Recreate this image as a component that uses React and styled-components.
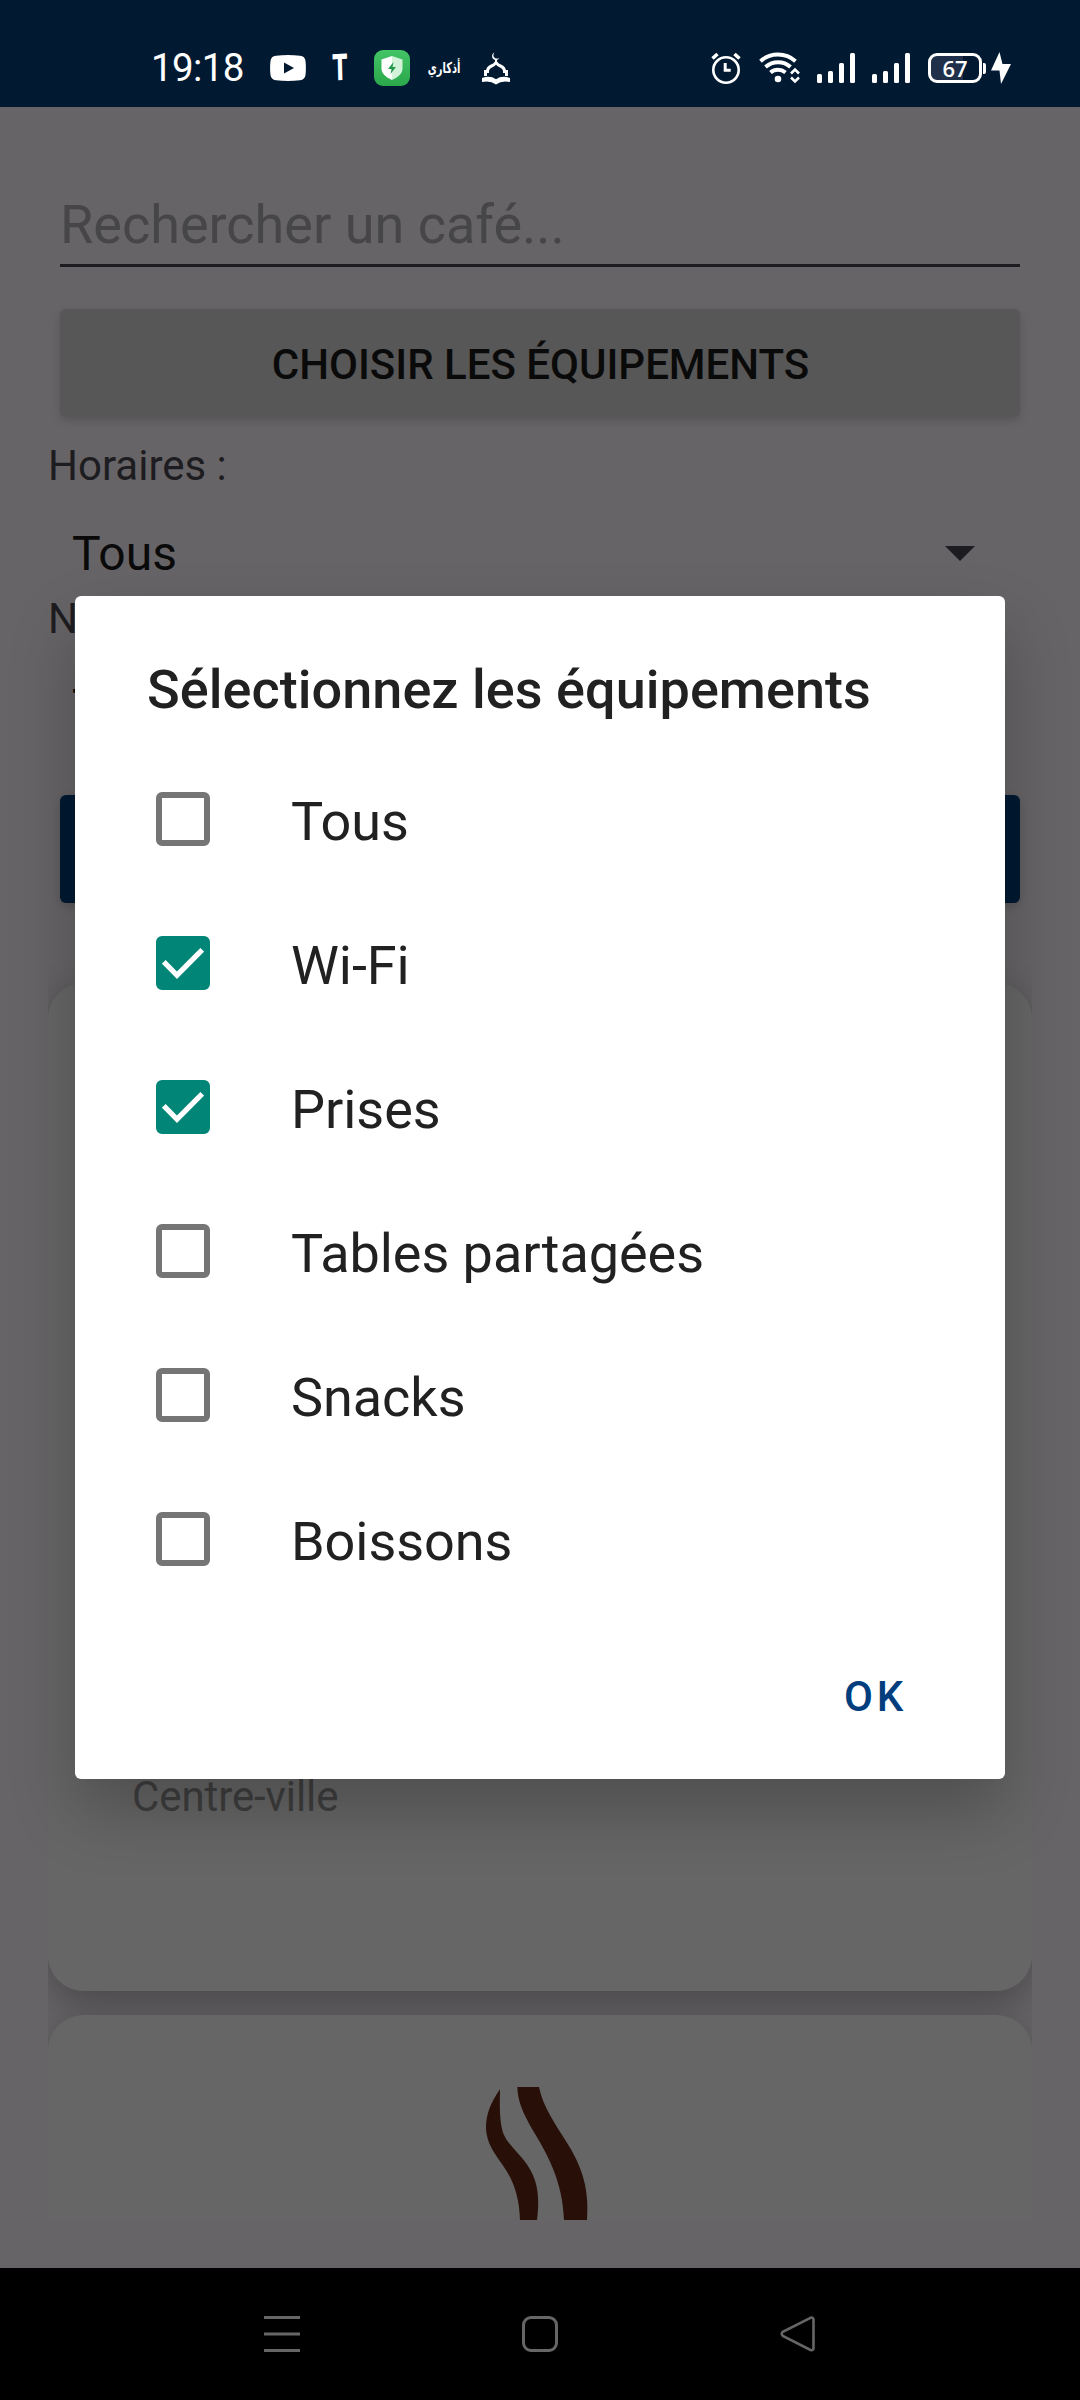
import React from "react";
import styled, { createGlobalStyle } from "styled-components";

const GlobalStyle = createGlobalStyle`
  * { box-sizing: border-box; }
  body { margin: 0; background: #000; }
`;

const Screen = styled.div`
  position: relative;
  display: flex;
  flex-direction: column;
  width: 1080px;
  height: 2400px;
  overflow: hidden;
  background: #676467;
  font-family: Roboto, "Liberation Sans", sans-serif;
`;

const StatusBar = styled.header`
  display: flex;
  align-items: center;
  justify-content: space-between;
  flex: none;
  height: 107px;
  padding: 29px 69px 0 151px;
  background: #011931;
  color: #fff;
`;

const StatusGroup = styled.div`
  display: flex;
  align-items: center;
`;

const Clock = styled.span`
  width: 97px;
  font-size: 38.5px;
  font-weight: 400;
  line-height: 44px;
  letter-spacing: -0.6px;
  white-space: nowrap;
`;

const Icon = styled.svg`
  display: block;
  flex: none;
  width: ${(p) => p.$w}px;
  height: ${(p) => p.$h}px;
  margin-left: ${(p) => p.$gap || 0}px;
`;

const LetterMark = styled.span`
  width: 16px;
  margin-left: 26px;
  font-family: "DejaVu Sans Condensed", "DejaVu Sans", sans-serif;
  font-size: 36px;
  font-weight: 700;
  line-height: 40px;
  display: flex;
  justify-content: center;
  transform: scaleX(0.66) rotate(-2deg);
`;

const ArabicMark = styled.span`
  width: 32px;
  margin-left: 18px;
  font-family: "DejaVu Sans", sans-serif;
  font-size: 15px;
  font-weight: 700;
  line-height: 20px;
  display: flex;
  justify-content: center;
  white-space: nowrap;
  transform: scaleX(0.66);
`;

const Battery = styled.div`
  display: flex;
  align-items: center;
  justify-content: center;
  width: 54px;
  height: 30px;
  margin-left: 18px;
  border: 3px solid #fff;
  border-radius: 9px;
  background: linear-gradient(90deg, #20304a 67%, #011931 67%);
  font-family: "Open Sans", sans-serif;
  font-size: 22px;
  font-weight: 600;
  line-height: 24px;
`;

const BatteryCap = styled.span`
  width: 3px;
  height: 11px;
  margin-left: 1px;
  border-radius: 0 2px 2px 0;
  background: #fff;
`;

const Page = styled.main`
  display: flex;
  flex-direction: column;
  flex: 1;
  min-height: 0;
  padding: 86px 48px 48px;
`;

const SearchField = styled.div`
  margin: 0 12px;
  padding-bottom: 8px;
  border-bottom: 3px solid #1d1c20;
  color: #464547;
  font-size: 54px;
  line-height: 63px;
  white-space: nowrap;
`;

const RaisedButton = styled.div`
  display: flex;
  align-items: center;
  justify-content: center;
  flex: none;
  height: 108px;
  margin: ${(p) => p.$top}px 12px 0;
  padding: 3px 0 0 1px;
  border-radius: 6px;
  background: ${(p) => p.$color};
  box-shadow: 0 3px 9px rgba(0, 0, 0, 0.16);
  color: #0a0a0a;
  font-size: 42px;
  font-weight: 500;
  line-height: 49px;
`;

const Label = styled.div`
  margin-top: ${(p) => p.$top || 0}px;
  color: #1d1c20;
  font-size: 42px;
  line-height: 49px;
`;

const Spinner = styled.div`
  display: flex;
  align-items: flex-start;
  justify-content: space-between;
  height: 104px;
  padding: 36px 57px 0 24px;
  color: #0a0a0a;
  font-size: 48px;
  line-height: 56px;
`;

const Arrow = styled.svg`
  width: 30px;
  height: 15px;
  margin-top: 20px;
`;

const CardList = styled.section`
  display: flex;
  flex-direction: column;
  gap: 24px;
  flex: 1;
  min-height: 0;
  margin-top: 50px;
  padding-top: 30px;
  overflow: hidden;
  isolation: isolate;
`;

const Card = styled.article`
  position: relative;
  display: flex;
  flex-direction: column;
  flex: none;
  height: 1008px;
  border-radius: 36px;
  background: #666;

  &::before {
    content: "";
    position: absolute;
    z-index: -1;
    inset: 0;
    border-radius: inherit;
    box-shadow: 0 12px 36px rgba(0, 0, 0, 0.28);
  }
`;

const CardPlace = styled.div`
  margin: auto 84px 170px;
  color: #3e3e3e;
  font-size: 42px;
  line-height: 49px;
  letter-spacing: -0.1px;
`;

const CardPicture = styled.svg`
  display: block;
  align-self: center;
  flex: none;
  width: 200px;
  height: 133px;
  margin-top: 72px;
`;

const NavBar = styled.nav`
  display: flex;
  align-items: center;
  justify-content: space-between;
  flex: none;
  height: 132px;
  padding: 0 264px;
  background: #000;
`;

const Dialog = styled.div`
  position: absolute;
  top: 596px;
  left: 75px;
  display: flex;
  flex-direction: column;
  width: 930px;
  height: 1183px;
  padding: 62px 72px 0;
  border-radius: 6px;
  background: #fff;
  box-shadow: 0 32px 66px rgba(0, 0, 0, 0.23);
  color: #212121;
`;

const DialogTitle = styled.h1`
  margin: 0 0 26px;
  font-size: 54px;
  font-weight: 500;
  line-height: 63px;
  letter-spacing: 0.04px;
  white-space: nowrap;
`;

const Option = styled.label`
  display: flex;
  align-items: center;
  flex: none;
  height: 144px;
  padding-left: 9px;
`;

const Checkbox = styled.span`
  display: flex;
  flex: none;
  width: 54px;
  height: 54px;
  border: 6px solid ${(p) => (p.$checked ? "#008577" : "#757575")};
  border-radius: 6px;
  background: ${(p) => (p.$checked ? "#008577" : "#fff")};
`;

const OptionText = styled.span`
  margin: 4px 0 0 81px;
  font-size: 54px;
  line-height: 63px;
  letter-spacing: -0.05px;
  white-space: nowrap;
`;

const DialogActions = styled.div`
  display: flex;
  justify-content: flex-end;
  margin-top: 61px;
  padding-right: 26px;
  color: #023e7d;
  font-size: 42px;
  font-weight: 500;
  line-height: 49px;
  letter-spacing: 3.75px;
`;

const OPTIONS = [
  { name: "Tous", checked: false },
  { name: "Wi-Fi", checked: true },
  { name: "Prises", checked: true },
  { name: "Tables partagées", checked: false },
  { name: "Snacks", checked: false },
  { name: "Boissons", checked: false },
];

function Signal() {
  return (
    <Icon $w={38} $h={30} $gap={17} viewBox="0 0 38 30" fill="#fff">
      <rect x="0" y="21" width="5" height="9" rx="1.5" />
      <rect x="11" y="18" width="5" height="12" rx="1.5" />
      <rect x="22" y="10" width="5" height="20" rx="1.5" />
      <rect x="33" y="0" width="5" height="30" rx="1.5" />
    </Icon>
  );
}

function DropArrow() {
  return (
    <Arrow viewBox="0 0 30 15">
      <path d="M0 0h30L15 15z" fill="#1d1c20" />
    </Arrow>
  );
}

function Status() {
  return (
    <StatusBar>
      <StatusGroup>
        <Clock>19:18</Clock>
        <Icon $w={36} $h={26} $gap={22} viewBox="0 0 36 26">
          <path d="M6 .8Q18-.6 30 .8q5 .6 5.500 5.200.8 7 0 14-.5 4.600-5.500 5.200-12 1.400-24 0Q1 24.600.5 20q-.8-7 0-14Q1 1.400 6 .8z" fill="#fff" />
          <path d="M14 7.500v11l10-5.500z" fill="#011931" />
        </Icon>
        <LetterMark>T</LetterMark>
        <Icon $w={36} $h={36} $gap={26} viewBox="0 0 36 36">
          <defs>
            <linearGradient id="shieldTile" x1="0" y1="0" x2="0" y2="1">
              <stop offset="0" stopColor="#43c466" />
              <stop offset="1" stopColor="#2aa84b" />
            </linearGradient>
          </defs>
          <rect width="36" height="36" rx="9" fill="url(#shieldTile)" />
          <path d="M18 6l10.500 3.500v9c0 5-4 8.500-10.500 11.500z" fill="#d2f2da" />
          <path d="M18 6L7.500 9.500v9c0 5 4 8.500 10.500 11.500z" fill="#fff" />
          <path d="M19.500 12l-5.500 7h3.500l-1 5 5.500-7h-3.500z" fill="#22994a" />
        </Icon>
        <ArabicMark>أذكاري</ArabicMark>
        <Icon $w={28} $h={33} $gap={22} viewBox="0 0 28 33" fill="none" stroke="#fff">
          <path d="M12.500.5c-2.500 3-.5 7.200 4.700 5.800-1.200 2.300-6 2.700-7-1C9.700 3 10.700 1.200 12.500.5z" fill="#fff" stroke="none" />
          <path d="M14 7v3" strokeWidth="2" />
          <path d="M3.500 24v-4.500h2c0-3 1.500-4.500 4-5.500 2-.8 3.500-2 4.500-3.500 1 1.500 2.500 2.700 4.500 3.500 2.500 1 4 2.500 4 5.500h2V24" strokeWidth="3" />
          <path d="M0 26q8-2.800 14 1.200 6-4 14-1.200v4q-8-2-14 2.500-6-4.500-14-2.500z" fill="#fff" stroke="none" />
        </Icon>
      </StatusGroup>
      <StatusGroup>
        <Icon $w={30} $h={32} viewBox="0 0 30 32" fill="none" stroke="#fff" strokeWidth="2.600">
          <circle cx="15" cy="18" r="12.700" />
          <path d="M14.200 11v7.300h5.500" strokeWidth="3" />
          <path d="M1.500 6.500l5-4.500M28.500 6.500L23.500 2" strokeWidth="3.600" />
        </Icon>
        <Icon $w={41} $h={32} $gap={18} viewBox="0 0 41 32" fill="none" stroke="#fff" strokeWidth="4">
          <path d="M1.500 9.200c10-8.800 25-8.800 35 0" />
          <path d="M6.500 15c7.200-6.400 18-6.400 25 0" />
          <path d="M11.500 20.500c4.300-3.600 10.500-3.600 15 0" />
          <circle cx="19" cy="27" r="3.300" fill="#fff" stroke="none" />
          <path d="M32 21.500l4-4 4 4M32 25.500l4 4 4-4" strokeWidth="2.600" />
        </Icon>
        <Signal />
        <Signal />
        <Battery>67</Battery>
        <BatteryCap />
        <Icon $w={20} $h={32} $gap={5} viewBox="0 0 20 32">
          <path d="M8.500 0L0 18.500h8.500L10 32l10-20h-8.500z" fill="#fff" />
        </Icon>
      </StatusGroup>
    </StatusBar>
  );
}

export default function App() {
  return (
    <Screen>
      <GlobalStyle />
      <Status />
      <Page>
        <SearchField>Rechercher un café...</SearchField>
        <RaisedButton $top={42} $color="#575757">CHOISIR LES ÉQUIPEMENTS</RaisedButton>
        <Label $top={24}>Horaires :</Label>
        <Spinner>
          Tous
          <DropArrow />
        </Spinner>
        <Label>N</Label>
        <Spinner>
          T
          <DropArrow />
        </Spinner>
        <RaisedButton $top={48} $color="#011931" />
        <CardList>
          <Card>
            <CardPlace>Centre-ville</CardPlace>
          </Card>
          <Card>
            <CardPicture viewBox="0 111 600 399" fill="#280f08">
              <path d="M180 118C150 160 137 198 138 238C141 280 160 305 188 345C220 390 238 440 240 510H291C300 440 293 390 262 345C240 312 205 285 192 255C178 222 179 170 180 118z" />
              <path d="M232 111C233 155 250 190 275 235C320 310 368 390 372 510H441C448 420 428 355 385 285C350 228 308 170 297 111z" />
            </CardPicture>
          </Card>
        </CardList>
      </Page>
      <NavBar>
        <Icon $w={36} $h={36} viewBox="0 0 36 36" stroke="#666" strokeWidth="3">
          <path d="M0 1.500h36M0 18h36M0 34.500h36" />
        </Icon>
        <Icon $w={36} $h={36} viewBox="0 0 36 36" fill="none" stroke="#666" strokeWidth="3">
          <rect x="1.500" y="1.500" width="33" height="33" rx="7.500" />
        </Icon>
        <Icon $w={36} $h={36} viewBox="0 0 36 36" fill="none" stroke="#666" strokeWidth="2.600">
          <path d="M30.500 1.800L2.800 15.800q-2.200 2 0 4L30.500 34q2.700.8 3-1.800V3.500q-.3-2.600-3-1.700z" />
        </Icon>
      </NavBar>
      <Dialog>
        <DialogTitle>Sélectionnez les équipements</DialogTitle>
        {OPTIONS.map((o) => (
          <Option key={o.name}>
            <Checkbox $checked={o.checked}>
              {o.checked && (
                <Icon $w={42} $h={42} viewBox="0 0 42 42" fill="none" stroke="#fff" strokeWidth="5.200">
                  <path d="M1.800 19.800L15 33.200L40.200 7.800" />
                </Icon>
              )}
            </Checkbox>
            <OptionText>{o.name}</OptionText>
          </Option>
        ))}
        <DialogActions>OK</DialogActions>
      </Dialog>
    </Screen>
  );
}
